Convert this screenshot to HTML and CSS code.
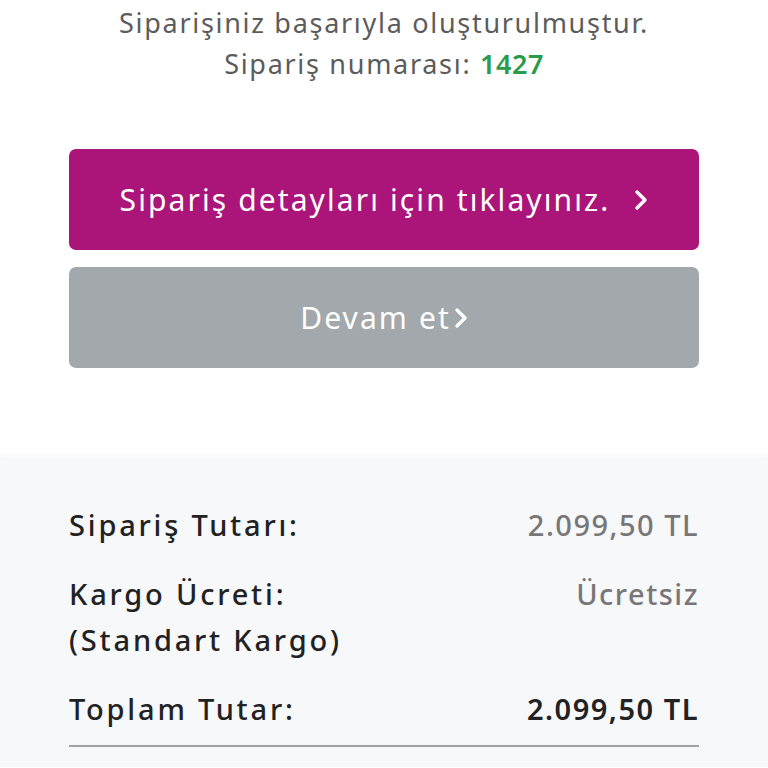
FILE: index.html
```html
<!DOCTYPE html>
<html lang="tr">

<head>
    <meta charset="UTF-8">
    <meta name="viewport" content="width=device-width, initial-scale=1.0">
    <title>Sipariş tamamlandı</title>
    <link rel="stylesheet" href="styles.css">
</head>

<body>
    <div class="result">
        <p class="result-text">Siparişiniz başarıyla oluşturulmuştur.</p>
        <p class="result-text">Sipariş numarası: <span class="order-no">1427</span></p>
    </div>

    <div class="actions">
        <a href="#" class="btn btn-primary">
            Sipariş detayları için tıklayınız.
            <svg class="chevron chevron-space" viewBox="0 0 14 22" width="14" height="22">
                <path d="M3 3 L11 11 L3 19" fill="none" stroke="#fff" stroke-width="3.4" stroke-linecap="round" stroke-linejoin="round" />
            </svg>
        </a>
        <a href="#" class="btn btn-gray">
            Devam et<svg class="chevron" viewBox="0 0 14 22" width="14" height="22">
                <path d="M3 3 L11 11 L3 19" fill="none" stroke="#fff" stroke-width="3.4" stroke-linecap="round" stroke-linejoin="round" />
            </svg>
        </a>
    </div>

    <div class="summary">
        <div class="summary-row">
            <span class="label">Sipariş Tutarı:</span>
            <span class="value">2.099,50 TL</span>
        </div>
        <div class="summary-row">
            <span class="label">Kargo Ücreti:<br>(Standart Kargo)</span>
            <span class="value">Ücretsiz</span>
        </div>
        <div class="summary-row total">
            <span class="label">Toplam Tutar:</span>
            <span class="value">2.099,50 TL</span>
        </div>
    </div>
</body>

</html>
```

FILE: styles.css
```css
* {
    margin: 0;
    padding: 0;
    box-sizing: border-box;
}

body {
    font-family: "Noto Sans", sans-serif;
    background: #fff;
    color: #222;
}

.result {
    text-align: center;
    padding-top: 2px;
}

.result-text {
    font-size: 27px;
    line-height: 41px;
    letter-spacing: 1.7px;
    color: #5c5c5c;
}

.order-no {
    color: #2a9b48;
    font-weight: 600;
    letter-spacing: 0.5px;
}

.actions {
    padding: 65px 69px 90px 69px;
    display: flex;
    flex-direction: column;
    gap: 17px;
}

.btn {
    display: flex;
    align-items: center;
    justify-content: center;
    height: 101px;
    border-radius: 7px;
    color: #fff;
    text-decoration: none;
    font-size: 30px;
    letter-spacing: 2.1px;
}

.btn-primary {
    background: #ab157a;
}

.btn-gray {
    background: #a2a8ab;
}

.chevron {
    margin-left: 3px;
}

.chevron-space {
    margin-left: 24px;
}

.summary {
    background: #f7f8fa;
    box-shadow: 0 -3px 5px rgba(0, 0, 0, 0.03);
    padding: 44px 69px 20px 69px;
}

.summary-row {
    display: flex;
    justify-content: space-between;
    align-items: flex-start;
    font-size: 29px;
    line-height: 46px;
    margin-bottom: 23px;
}

.label {
    font-weight: 500;
    color: #222;
    letter-spacing: 2.8px;
}

.value {
    color: #777;
    font-weight: 500;
    letter-spacing: 1.5px;
}

.total {
    margin-bottom: 0;
    padding-bottom: 13px;
    border-bottom: 2px solid #a0a0a0;
}

.total .value {
    color: #222;
    font-weight: 600;
}
```
